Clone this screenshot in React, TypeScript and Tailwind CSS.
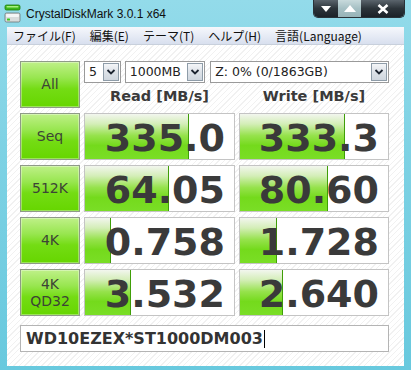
import React from "react";

type Row = {
  label: string[];
  read: string;
  readBar: number;
  write: string;
  writeBar: number;
};

const rows: Row[] = [
  { label: ["Seq"], read: "335.0", readBar: 104, write: "333.3", writeBar: 105 },
  { label: ["512K"], read: "64.05", readBar: 84, write: "80.60", writeBar: 88 },
  { label: ["4K"], read: "0.758", readBar: 26, write: "1.728", writeBar: 37 },
  { label: ["4K", "QD32"], read: "3.532", readBar: 46, write: "2.640", writeBar: 43 },
];

const menu = ["ファイル(F)", "編集(E)", "テーマ(T)", "ヘルプ(H)", "言語(Language)"];

function AppIcon() {
  return (
    <svg width="17" height="20" viewBox="0 0 17 20">
      <rect x="1" y="1" width="15" height="5" rx="1.5" fill="#3cb81c" stroke="#1e7a0a" strokeWidth="0.8" />
      <rect x="2.5" y="2" width="12" height="1.5" rx="0.7" fill="#a8f080" />
      <rect x="1" y="9" width="15" height="9" rx="1.5" fill="#d8dcdc" stroke="#6c7474" strokeWidth="0.8" />
      <rect x="2" y="10" width="13" height="3" rx="1" fill="#f4f6f6" />
      <rect x="3" y="14.5" width="3" height="2" rx="0.5" fill="#3cc81c" />
    </svg>
  );
}

function Chevron() {
  return (
    <svg width="10" height="8" viewBox="0 0 10 8">
      <path d="M1.5 2 L5 5.5 L8.5 2" fill="none" stroke="#1c2430" strokeWidth="1.8" />
    </svg>
  );
}

function Select({ text, className }: { text: string; className: string }) {
  return (
    <div className={`flex h-[22px] items-stretch border border-[#9a9a9a] bg-white ${className}`}>
      <div className="flex flex-1 items-center pl-[4px] text-[12.5px] text-[#222] [font-family:'DejaVu_Sans',sans-serif]">
        {text}
      </div>
      <div className="m-[1px] flex w-[16px] items-center justify-center border border-[#8e9ca8] bg-[linear-gradient(to_bottom,#f4f6f8,#dde2e8_50%,#cfd6de)]">
        <Chevron />
      </div>
    </div>
  );
}

function LabelButton({ lines }: { lines: string[] }) {
  return (
    <div className="flex h-[47px] flex-col items-center justify-center border border-[#8f9a88] bg-[linear-gradient(to_bottom,#bff088,#98e650_35%,#74dc14_60%,#66d600)] shadow-[inset_0_0_0_1px_rgba(255,255,255,0.35)] text-[14px] leading-[17px] text-[#3c4436] [font-family:'DejaVu_Sans',sans-serif]">
      {lines.map((l) => (
        <span key={l}>{l}</span>
      ))}
    </div>
  );
}

function ValueCell({ value, bar }: { value: string; bar: number }) {
  return (
    <div className="relative h-[47px] overflow-hidden border border-[#c4c4c4] bg-white">
      <div
        className="absolute inset-y-0 left-0 border-r border-[#3f9e08] bg-[linear-gradient(to_bottom,#f2f6ee,#d4eeb8_22%,#96e24c_48%,#74da1c_70%,#7ade26)]"
        style={{ width: bar }}
      />
      <div className="relative flex h-full items-center justify-end pr-[9px] pt-[3px] text-[38px] font-bold leading-none text-[#3a3a3a] [font-family:'DejaVu_Sans',sans-serif]">
        {value}
      </div>
    </div>
  );
}

export default function App() {
  return (
    <div className="flex h-[370px] w-[411px] flex-col bg-[linear-gradient(to_bottom,#93dbea,#7ed2e4_40%,#68c9de)]">
      <div className="flex h-[27px] items-start justify-between">
        <div className="flex h-full items-center gap-[5px] pl-[4px]">
          <AppIcon />
          <span className="text-[12px] text-[#101010] [font-family:'Liberation_Sans',sans-serif]">
            CrystalDiskMark 3.0.1 x64
          </span>
        </div>
        <div className="mr-[6px] flex h-[18px] overflow-hidden rounded-b-[5px] border border-t-0 border-[#2a3238]">
          <div className="flex w-[24px] items-center justify-center bg-[linear-gradient(to_bottom,#5a646c,#2c343a_50%,#1c2228)]">
            <svg width="10" height="6" viewBox="0 0 10 6">
              <path d="M0 0 H10 L5 6 Z" fill="#ffffff" />
            </svg>
          </div>
          <div className="flex w-[23px] items-center justify-center bg-[linear-gradient(to_bottom,#c8dadc,#a6c0c4_50%,#98b4b8)]">
            <svg width="12" height="7" viewBox="0 0 12 7">
              <path d="M0 7 H12 L6 0 Z" fill="#ffffff" />
            </svg>
          </div>
          <div className="flex w-[43px] items-center justify-center bg-[linear-gradient(to_bottom,#5a646c,#2c343a_50%,#1c2228)]">
            <svg width="12" height="10" viewBox="0 0 12 10">
              <path d="M1.5 1 L10.5 9 M10.5 1 L1.5 9" stroke="#ffffff" strokeWidth="2.6" />
            </svg>
          </div>
        </div>
      </div>

      <div className="mx-[7px] flex h-[17px] items-center gap-[14px] bg-[linear-gradient(to_bottom,#f6f8fc,#e4e9f4_60%,#d8dfee)] pl-[6px] text-[12px] text-[#101010] [font-family:'Noto_Sans_CJK_JP',sans-serif]">
        {menu.map((m) => (
          <span key={m}>{m}</span>
        ))}
      </div>

      <div className="mx-[7px] mb-[4px] flex-1 border-t border-[#c8d0dc] bg-[repeating-linear-gradient(135deg,#ffffff_0px,#ffffff_3px,#f1f1f1_3px,#f1f1f1_4px)] pl-[13px] pt-[16px]">
        <div className="grid grid-cols-[60px_151px_150px] gap-x-[4px] gap-y-[5px]">
          <LabelButton lines={["All"]} />
          <div className="col-span-2 flex h-[47px] flex-col">
            <div className="flex gap-[4px]">
              <Select text="5" className="w-[37px]" />
              <Select text="1000MB" className="w-[81px]" />
              <Select text="Z: 0% (0/1863GB)" className="ml-[1px] w-[180px]" />
            </div>
            <div className="grid flex-1 grid-cols-[151px_150px] gap-x-[4px] pt-[3px] text-[14.5px] font-bold text-[#3a3a3a] [font-family:'DejaVu_Sans',sans-serif]">
              <div className="flex items-center justify-center">Read [MB/s]</div>
              <div className="flex items-center justify-center">Write [MB/s]</div>
            </div>
          </div>

          {rows.map((r) => (
            <React.Fragment key={r.read}>
              <LabelButton lines={r.label} />
              <ValueCell value={r.read} bar={r.readBar} />
              <ValueCell value={r.write} bar={r.writeBar} />
            </React.Fragment>
          ))}

          <div className="col-span-3 mt-[4px] flex h-[27px] items-center border border-[#b4b4b4] bg-white pl-[5px] text-[16px] font-bold text-[#333] [font-family:'DejaVu_Sans',sans-serif]">
            WD10EZEX*ST1000DM003
            <span className="ml-[1px] h-[18px] w-[1px] bg-black" />
          </div>
        </div>
      </div>
    </div>
  );
}
